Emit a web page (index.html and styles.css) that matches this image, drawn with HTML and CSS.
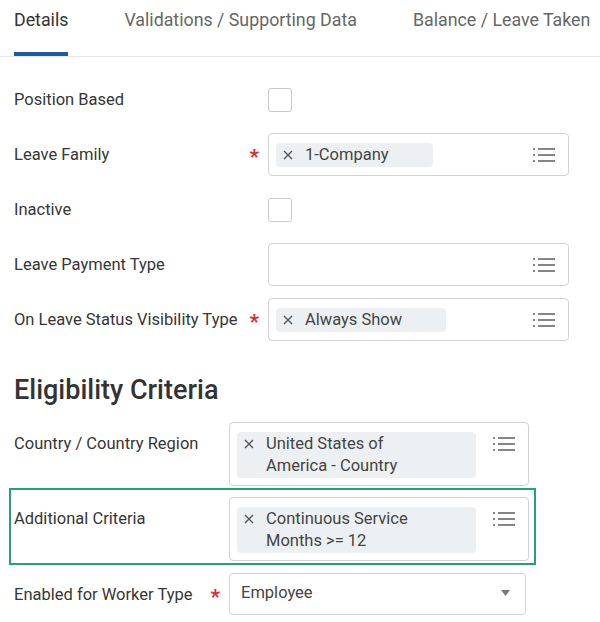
FILE: index.html
```html
<!DOCTYPE html>
<html>
<head>
    <link rel="stylesheet" href="styles.css">
</head>
<body>
    <div class="page">
        <div class="tabs">
            <div class="tab active">Details</div>
            <div class="tab">Validations / Supporting Data</div>
            <div class="tab">Balance / Leave Taken</div>
        </div>

        <div class="form main">
            <div class="row">
                <div class="label">Position Based</div>
                <div class="check-wrap"><div class="checkbox"></div></div>
            </div>
            <div class="row">
                <div class="label">Leave Family <span class="req">*</span></div>
                <div class="input">
                    <div class="chip"><span class="x"><svg width="10" height="10" viewBox="0 0 10 10"><path d="M1 1L9 9M9 1L1 9" stroke="#555" stroke-width="1.4"/></svg></span><span class="chip-text">1-Company</span></div>
                    <svg class="list-icon" width="22" height="16" viewBox="0 0 22 16"><path d="M0 2h2M0 8h2M0 14h2M5 2h17M5 8h17M5 14h17" stroke="#858585" stroke-width="1.8"/></svg>
                </div>
            </div>
            <div class="row">
                <div class="label">Inactive</div>
                <div class="check-wrap"><div class="checkbox"></div></div>
            </div>
            <div class="row">
                <div class="label">Leave Payment Type</div>
                <div class="input">
                    <svg class="list-icon" width="22" height="16" viewBox="0 0 22 16"><path d="M0 2h2M0 8h2M0 14h2M5 2h17M5 8h17M5 14h17" stroke="#858585" stroke-width="1.8"/></svg>
                </div>
            </div>
            <div class="row">
                <div class="label">On Leave Status Visibility Type <span class="req">*</span></div>
                <div class="input">
                    <div class="chip"><span class="x"><svg width="10" height="10" viewBox="0 0 10 10"><path d="M1 1L9 9M9 1L1 9" stroke="#555" stroke-width="1.4"/></svg></span><span class="chip-text">Always Show</span></div>
                    <svg class="list-icon" width="22" height="16" viewBox="0 0 22 16"><path d="M0 2h2M0 8h2M0 14h2M5 2h17M5 8h17M5 14h17" stroke="#858585" stroke-width="1.8"/></svg>
                </div>
            </div>
        </div>

        <div class="section-title">Eligibility Criteria</div>

        <div class="form criteria">
            <div class="row">
                <div class="label">Country / Country Region</div>
                <div class="input">
                    <div class="chip wide"><span class="x"><svg width="10" height="10" viewBox="0 0 10 10"><path d="M1 1L9 9M9 1L1 9" stroke="#555" stroke-width="1.4"/></svg></span><span class="chip-text">United States of America - Country</span></div>
                    <svg class="list-icon" width="22" height="16" viewBox="0 0 22 16"><path d="M0 2h2M0 8h2M0 14h2M5 2h17M5 8h17M5 14h17" stroke="#858585" stroke-width="1.8"/></svg>
                </div>
            </div>
            <div class="row highlight">
                <div class="label">Additional Criteria</div>
                <div class="input">
                    <div class="chip wide"><span class="x"><svg width="10" height="10" viewBox="0 0 10 10"><path d="M1 1L9 9M9 1L1 9" stroke="#555" stroke-width="1.4"/></svg></span><span class="chip-text">Continuous Service Months &gt;= 12</span></div>
                    <svg class="list-icon" width="22" height="16" viewBox="0 0 22 16"><path d="M0 2h2M0 8h2M0 14h2M5 2h17M5 8h17M5 14h17" stroke="#858585" stroke-width="1.8"/></svg>
                </div>
            </div>
            <div class="row last">
                <div class="label">Enabled for Worker Type <span class="req">*</span></div>
                <div class="select">
                    <span>Employee</span>
                    <svg width="9" height="6" viewBox="0 0 9 6"><path d="M0 0h9L4.5 6z" fill="#7a7a7a"/></svg>
                </div>
            </div>
        </div>
    </div>
</body>
</html>
```

FILE: styles.css
```css
body {
    font-family: 'Roboto', 'Liberation Sans', sans-serif;
    margin: 0;
    padding: 0;
    background: white;
    color: #333;
}
.page {
    width: 600px;
}
.tabs {
    display: flex;
    gap: 56px;
    padding-left: 14px;
    border-bottom: 1px solid #e6e6e6;
}
.tab {
    font-size: 17.8px;
    line-height: 24px;
    padding: 8px 0 20px;
    border-bottom: 4px solid transparent;
    color: #666;
    white-space: nowrap;
}
.tab.active {
    color: #333;
    border-bottom-color: #1c5c9e;
}
.form {
    display: flex;
    flex-direction: column;
    padding: 0 14px;
}
.form.main {
    padding-top: 21px;
    gap: 12px;
}
.row {
    display: flex;
    align-items: flex-start;
}
.label {
    flex: none;
    display: flex;
    justify-content: space-between;
    box-sizing: border-box;
    padding-top: 11px;
    font-size: 16.5px;
    line-height: 22px;
    color: #363636;
}
.main .label {
    width: 254px;
}
.criteria .label {
    width: 215px;
}
.req {
    color: #e0282e;
    font-size: 21px;
    font-weight: bold;
    line-height: 22px;
    margin-right: 9px;
    padding-top: 2px;
    height: 16px;
}
.check-wrap {
    height: 43px;
    display: flex;
    align-items: center;
}
.checkbox {
    width: 24px;
    height: 24px;
    box-sizing: border-box;
    border: 1px solid #c9c9c9;
    border-radius: 3px;
}
.input {
    display: flex;
    align-items: flex-start;
    box-sizing: border-box;
    min-height: 43px;
    border: 1px solid #d2d2d2;
    border-radius: 4px;
    padding: 9px 13px 7px 7px;
}
.main .input {
    width: 301px;
}
.criteria .input {
    width: 300px;
}
.chip {
    display: flex;
    align-items: flex-start;
    background: #edf0f2;
    border-radius: 4px;
    padding: 1px 44px 1px 7px;
    font-size: 16.5px;
    line-height: 22px;
    color: #444;
}
.chip.wide {
    width: 239px;
    box-sizing: border-box;
}
.x {
    flex: none;
    display: flex;
    align-items: center;
    height: 22px;
    margin-right: 12px;
}
.list-icon {
    flex: none;
    margin-left: auto;
    margin-top: 4px;
}
.section-title {
    font-size: 27px;
    font-weight: 500;
    line-height: 32px;
    color: #333;
    padding-left: 14px;
    margin: 33px 0 16px;
}
.highlight {
    margin: 2px 0 0 -5px;
    width: 527px;
    box-sizing: border-box;
    border: 2px solid #26a079;
    padding: 7px 0 2px 3px;
}
.row.last {
    margin-top: 8px;
}
.select {
    display: flex;
    align-items: center;
    justify-content: space-between;
    box-sizing: border-box;
    width: 297px;
    height: 42px;
    border: 1px solid #d2d2d2;
    border-radius: 4px;
    padding: 0 15px 3px 11px;
    font-size: 16.5px;
    color: #444;
}
```
